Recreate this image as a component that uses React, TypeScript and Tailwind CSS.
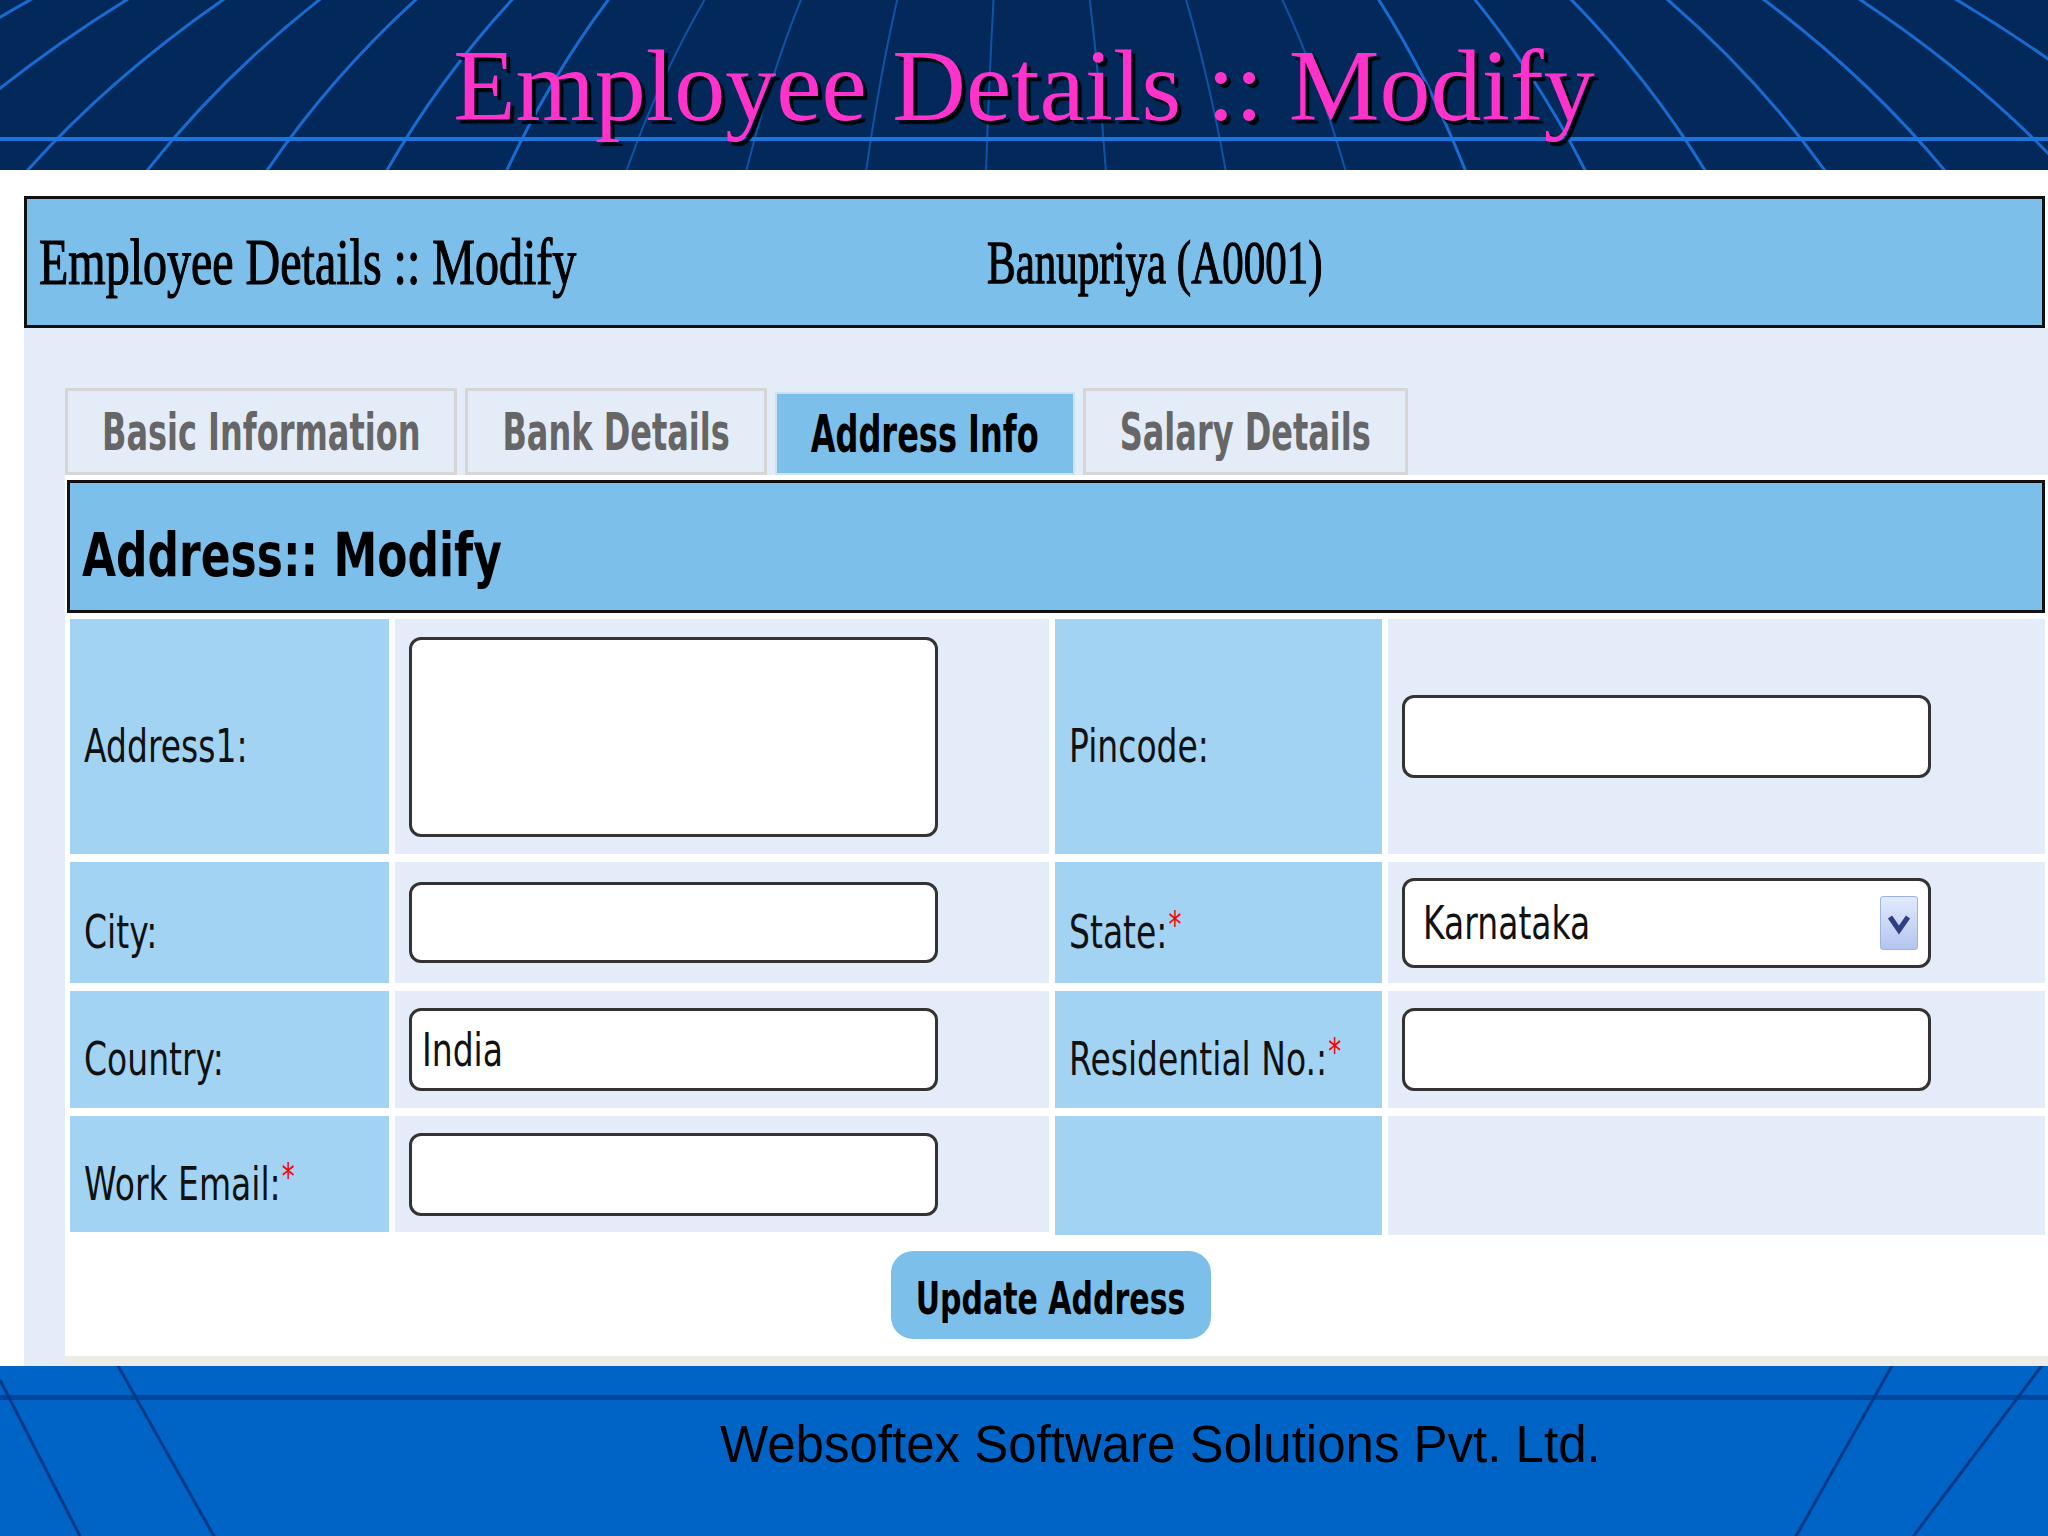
import React from "react";

const serif = "font-['Liberation_Serif','Times_New_Roman',serif]";
const sans = "font-['DejaVu_Sans','Verdana',sans-serif]";

function HeaderGrid() {
  const bottoms: number[] = [];
  for (let n = -11; n <= 11; n++) bottoms.push(986 + n * 120);
  return (
    <svg className="absolute inset-0 h-full w-full" viewBox="0 0 2048 170" preserveAspectRatio="none">
      {bottoms.map((b) => {
        const t = 1024 + (b - 1024) * 0.8;
        const cx = b + (t - b) * 0.42;
        const far = Math.abs(b - 1024) > 420;
        return (
          <path
            key={b}
            d={`M ${b} 172 Q ${cx} 78 ${t} -2`}
            fill="none"
            stroke="#1a6fd8"
            strokeWidth={far ? 3 : 2}
            opacity={far ? 0.95 : 0.6}
          />
        );
      })}
      <rect x="0" y="137" width="2048" height="4" fill="#1c74de" />
    </svg>
  );
}

function FooterLines() {
  return (
    <svg className="absolute inset-0 h-full w-full" viewBox="0 0 2048 170" preserveAspectRatio="none">
      <rect x="0" y="29" width="2048" height="5" fill="#00469e" />
      <line x1="0" y1="14" x2="81" y2="172" stroke="#003a86" strokeWidth="3" />
      <line x1="117" y1="-2" x2="215" y2="172" stroke="#003a86" strokeWidth="3" />
      <line x1="1893" y1="-2" x2="1795" y2="172" stroke="#003a86" strokeWidth="3" />
      <line x1="2043" y1="-2" x2="1912" y2="172" stroke="#003a86" strokeWidth="3" />
    </svg>
  );
}

function Req() {
  return <span className="relative -top-[7px] ml-[1px] text-[26px] text-[#ff0000]">*</span>;
}

function Label({ children }: { children: React.ReactNode }) {
  return (
    <div className="flex items-center bg-[#a3d3f3] pl-[14px] pt-[18px]">
      <span className={`${sans} inline-block origin-center scale-y-[1.4] text-[33px] leading-none text-[#111]`}>
        {children}
      </span>
    </div>
  );
}

function Field({ children }: { children?: React.ReactNode }) {
  return <div className="flex items-center bg-[#e3ecf8] pl-[14px]">{children}</div>;
}

function TextBox({ h, value }: { h: string; value?: string }) {
  return (
    <div className={`flex w-[529px] items-center rounded-[12px] border-[3px] border-[#333] bg-white pl-[10px] ${h}`}>
      {value && (
        <span className={`${sans} inline-block scale-y-[1.4] text-[33px] leading-none text-[#111]`}>{value}</span>
      )}
    </div>
  );
}

const tabs = [
  { label: "Basic Information", active: false },
  { label: "Bank Details", active: false },
  { label: "Address Info", active: true },
  { label: "Salary Details", active: false },
];

export default function App() {
  return (
    <div className="flex h-[1536px] w-[2048px] flex-col overflow-hidden bg-white">
      {/* Slide title */}
      <header className="relative h-[170px] shrink-0 bg-[#02295a]">
        <HeaderGrid />
        <div className="relative flex justify-center pt-[35px]">
          <h1
            className={`${serif} text-[102px] font-normal leading-none text-[#ff33cc] [text-shadow:4px_4px_1px_rgba(0,0,0,0.9)]`}
          >
            Employee Details :: Modify
          </h1>
        </div>
      </header>

      <div className="h-[26px] shrink-0 bg-white" />

      <div className="flex flex-1 flex-col pl-[24px]">
        {/* Employee header box */}
        <div className="mr-[3px] flex h-[132px] shrink-0 items-center border-[3px] border-[#111] bg-[#7bbfea] pl-[12px]">
          <div className="w-[948px]">
            <span
              className={`${serif} inline-block scale-y-[1.35] text-[48px] leading-none text-black [-webkit-text-stroke:0.9px_black]`}
            >
              Employee Details :: Modify
            </span>
          </div>
          <span
            className={`${serif} inline-block scale-y-[1.4] text-[43px] leading-none text-black [-webkit-text-stroke:0.9px_black]`}
          >
            Banupriya (A0001)
          </span>
        </div>

        <div className="flex flex-1 flex-col bg-[#e3ecf8] pl-[41px] pt-[60px]">
          {/* Tabs */}
          <div className="flex h-[87px] shrink-0 gap-[8px]">
            {tabs.map((t) => (
              <div
                key={t.label}
                className={`flex items-center px-[34px] ${
                  t.active
                    ? "mt-[4px] border-[2px] border-[#cfe0ef] bg-[#7bbfea] text-black"
                    : "border-[3px] border-[#d6d6d6] bg-[#e4ecf8] text-[#666]"
                }`}
              >
                <span className={`${sans} inline-block scale-y-[1.6] text-[32px] font-bold leading-none`}>
                  {t.label}
                </span>
              </div>
            ))}
          </div>

          {/* Panel */}
          <div className="flex flex-1 flex-col bg-white">
            <div className="h-[5px] shrink-0" />
            <div className="ml-[2px] mr-[3px] flex h-[133px] shrink-0 items-center border-[3px] border-[#111] bg-[#7bbfea] pl-[12px] pt-[16px]">
              <span className={`${sans} inline-block scale-y-[1.38] text-[44px] font-bold leading-none text-black`}>
                Address:: Modify
              </span>
            </div>
            <div className="h-[6px] shrink-0" />

            <div className="ml-[5px] mr-[3px] grid shrink-0 grid-cols-[319px_654px_327px_1fr] grid-rows-[235px_121px_117px_116px] gap-x-[6px] gap-y-[8px]">
              <Label>Address1:</Label>
              <Field>
                <TextBox h="h-[200px]" />
              </Field>
              <Label>Pincode:</Label>
              <Field>
                <TextBox h="h-[83px]" />
              </Field>

              <Label>City:</Label>
              <Field>
                <TextBox h="h-[81px]" />
              </Field>
              <Label>
                State:<Req />
              </Label>
              <Field>
                <div className="flex h-[90px] w-[529px] items-center justify-between rounded-[12px] border-[3px] border-[#333] bg-white pl-[18px] pr-[10px]">
                  <span className={`${sans} inline-block scale-y-[1.4] text-[33px] leading-none text-[#111]`}>
                    Karnataka
                  </span>
                  <div className="flex h-[54px] w-[38px] items-center justify-center rounded-[3px] border border-[#9fb3e0] bg-linear-to-b from-[#e2eafc] to-[#b3c5f0]">
                    <svg width="24" height="26" viewBox="0 0 24 26">
                      <path d="M3 7 L12 20 L21 7" fill="none" stroke="#2e3f82" strokeWidth="5" strokeLinejoin="miter" />
                    </svg>
                  </div>
                </div>
              </Field>

              <Label>Country:</Label>
              <Field>
                <TextBox h="h-[83px]" value="India" />
              </Field>
              <Label>
                Residential No.:<Req />
              </Label>
              <Field>
                <TextBox h="h-[83px]" />
              </Field>

              <Label>
                Work Email:<Req />
              </Label>
              <Field>
                <TextBox h="h-[83px]" />
              </Field>
              <div className="-mb-[3px] bg-[#a3d3f3]" />
              <div className="-mb-[3px] bg-[#e3ecf8]" />
            </div>

            <div className="flex flex-1 items-start justify-center pr-[12px] pt-[19px]">
              <button className="flex h-[88px] w-[320px] items-center justify-center rounded-[22px] bg-[#7bbfea] pt-[8px]">
                <span className={`${sans} inline-block scale-y-[1.5] text-[30px] font-bold leading-none text-black`}>
                  Update Address
                </span>
              </button>
            </div>
            <div className="h-[10px] shrink-0 bg-[#ecece6]" />
          </div>
        </div>
      </div>

      {/* Footer */}
      <footer className="relative h-[170px] shrink-0 bg-[#0063c6]">
        <FooterLines />
        <div className="relative pl-[720px] pt-[53px]">
          <span className="font-['Liberation_Sans','Arial',sans-serif] text-[51px] leading-none text-black">
            Websoftex Software Solutions Pvt. Ltd.
          </span>
        </div>
      </footer>
    </div>
  );
}
